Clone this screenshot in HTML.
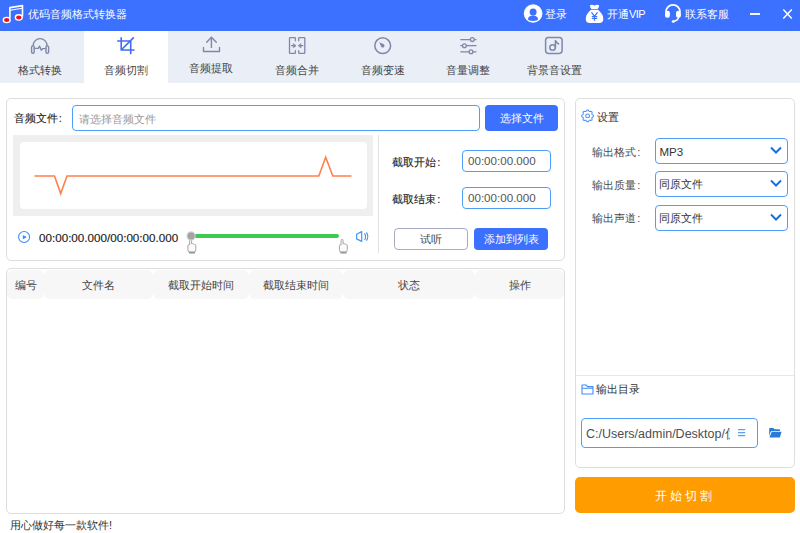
<!DOCTYPE html>
<html><head><meta charset="utf-8">
<style>
*{margin:0;padding:0;box-sizing:border-box}
html,body{width:800px;height:533px;overflow:hidden;background:#fff;font-family:"Liberation Sans",sans-serif;color:#333}
.a{position:absolute;white-space:nowrap}
#title{left:0;top:0;width:800px;height:31px;background:#3c70fe}
.tt{color:#fff;font-size:11px;line-height:14px}
#tabs{left:0;top:31px;width:800px;height:52px;background:#e9eef7}
.tab-act{left:84px;top:31px;width:84px;height:52px;background:#fff}
.tl{font-size:11px;line-height:14px;color:#444}
.panel{border:1px solid #dedede;border-radius:5px;background:#fff}
.lbl{font-size:11px;line-height:14px;color:#222;-webkit-text-stroke:0.1px #222}
.inp{border:1px solid #4f9ff8;border-radius:4px;background:#fff}
.btnb{background:#3c70fe;border-radius:4px;color:#fff;font-size:11px;line-height:14px;text-align:center}
.th{background:#f7f7f7;border-radius:5px;font-size:11px;line-height:14px;color:#444;text-align:center;border-radius:6px}
.sel{border:1px solid #4f9ff8;border-radius:4px;background:#fff;font-size:11px;color:#333}
</style></head><body>
<!-- title bar -->
<div id="title" class="a"></div>
<svg class="a" style="left:0;top:0" width="30" height="30" viewBox="0 0 30 30">
  <path d="M9.9 18 V7.6 L22.5 5.6 V16.5" fill="none" stroke="#fff" stroke-width="1.6" stroke-linejoin="round"/>
  <path d="M9.9 10.2 L22.5 8.2" fill="none" stroke="#fff" stroke-width="1.1"/>
  <ellipse cx="6.7" cy="20" rx="4.1" ry="3.3" fill="#fff"/>
  <ellipse cx="6.7" cy="20" rx="2.7" ry="2" fill="#e8141c"/>
  <ellipse cx="18.8" cy="17.4" rx="4.1" ry="3.3" fill="#fff"/>
  <ellipse cx="18.8" cy="17.4" rx="2.7" ry="2" fill="#e8141c"/>
</svg>
<div class="a tt" style="left:28px;top:7px">优码音频格式转换器</div>

<svg class="a" style="left:520px;top:0" width="90" height="30" viewBox="520 0 90 30">
  <circle cx="533.1" cy="13.5" r="9.3" fill="#fff"/>
  <circle cx="533.1" cy="12.1" r="3.5" fill="#3c70fe"/>
  <path d="M527.9 19.2 Q528.5 15.6 533 15.6 Q537.5 15.6 538.1 19.2 Q537.5 20.9 533 20.9 Q528.5 20.9 527.9 19.2 Z" fill="#3c70fe"/>
</svg>
<div class="a tt" style="left:545px;top:7px">登录</div>
<svg class="a" style="left:580px;top:0" width="30" height="30" viewBox="580 0 30 30">
  <path d="M590 5.2 Q592 4 594.5 5.6 Q597 4 599 5.2 Q599.5 7.5 597.6 9 H591.4 Q589.5 7.5 590 5.2 Z" fill="#fff"/>
  <path d="M591 9.8 H598 Q603.6 14.5 603.3 19.5 Q603 22.9 599.5 22.9 H589.5 Q586 22.9 585.8 19.5 Q585.5 14.5 591 9.8 Z" fill="#fff"/>
  <path d="M591.5 12.3 L594.5 16.3 L597.5 12.3 M594.5 16.3 V20.7 M591.8 16.6 H597.2 M591.8 18.5 H597.2" fill="none" stroke="#3c70fe" stroke-width="1.2"/>
</svg>
<div class="a tt" style="left:607px;top:7px">开通<span style="letter-spacing:-0.6px">VIP</span></div>
<svg class="a" style="left:660px;top:0" width="26" height="30" viewBox="660 0 26 30">
  <path d="M666 12 A7 7.2 0 0 1 680 12" fill="none" stroke="#fff" stroke-width="1.8"/>
  <rect x="665" y="10.8" width="4.9" height="7" rx="2.2" fill="#fff"/>
  <rect x="676" y="10.8" width="4.9" height="7" rx="2.2" fill="#fff"/>
  <path d="M678.8 17 Q678 20.5 673.5 21.3" fill="none" stroke="#fff" stroke-width="1.3"/>
  <ellipse cx="673.3" cy="21.5" rx="1.6" ry="1.2" fill="#fff"/>
</svg>
<div class="a tt" style="left:685px;top:7px">联系客服</div>
<div class="a" style="left:749.5px;top:13.2px;width:10.5px;height:1.6px;background:#f4f6ff"></div>
<svg class="a" style="left:780px;top:6px" width="16" height="16" viewBox="780 6 16 16">
  <path d="M783.3 9.4 L791.8 18.4 M791.8 9.4 L783.3 18.4" stroke="#fff" stroke-width="1.5"/>
</svg>

<!-- tabs -->
<div id="tabs" class="a"></div>
<div class="a tab-act"></div>
<svg class="a" style="left:0;top:0" width="600" height="60" fill="none" stroke-linecap="round" stroke-linejoin="round">
  <g stroke="#7f88a8" stroke-width="1.4">
    <path d="M33.2 45.5 A6.9 6.9 0 0 1 47 45.5"/>
    <rect x="31.6" y="45.9" width="2.6" height="7.4" rx="1.2"/>
    <rect x="46" y="45.9" width="2.6" height="7.4" rx="1.2"/>
    <path d="M35.2 48.4 H38.3 L39.6 46.2 L41.3 50.2 L42.6 48.6 H45.5"/>
  </g>
  <g stroke="#3d6ef5" stroke-width="1.6" stroke-linecap="butt">
    <path d="M117.2 41 H130.7 V54.3"/>
    <path d="M121.2 37.2 V50 H134.5"/>
    <path d="M121.2 50 L133.8 37.4"/>
  </g>
  <g stroke="#7f88a8" stroke-width="1.4">
    <path d="M206.7 42.2 L211.4 37.3 L216.3 42.2"/>
    <path d="M211.4 37.5 V47.4"/>
    <path d="M203.5 47.4 V51.5 H219.5 V47.4"/>
  </g>
  <g stroke="#7f88a8" stroke-width="1.3">
    <path d="M295.4 40.8 V38.2 Q295.4 37.6 294.8 37.6 H290.1 Q289.5 37.6 289.5 38.2 V52.8 Q289.5 53.4 290.1 53.4 H294.8 Q295.4 53.4 295.4 52.8 V50.7"/>
    <path d="M298.7 40.8 V38.2 Q298.7 37.6 299.3 37.6 H304.2 Q304.8 37.6 304.8 38.2 V52.8 Q304.8 53.4 304.2 53.4 H299.3 Q298.7 53.4 298.7 52.8 V50.7"/>
    <path d="M291.5 45.7 H294"/>
    <path d="M302.8 45.7 H300.3"/>
  </g>
  <path d="M293.6 43.7 L296.1 45.7 L293.6 47.7 Z M300.7 43.7 L298.2 45.7 L300.7 47.7 Z" fill="#7f88a8" stroke="#7f88a8" stroke-width="0.6" stroke-linejoin="round"/>
  <g stroke="#7f88a8" stroke-width="1.5">
    <circle cx="382.7" cy="45.7" r="7.9"/>
  </g>
  <path d="M379.3 42.3 L383.4 44.04 A1.8 1.8 0 1 1 381.04 46.4 Z" fill="#7f88a8"/>
  <g stroke="#7f88a8" stroke-width="1.3">
    <path d="M460.8 39.6 H476"/>
    <path d="M460.8 45.7 H476"/>
    <path d="M460.8 51.8 H476"/>
  </g>
  <g stroke="#7f88a8" stroke-width="1.3" fill="#e9eef7">
    <circle cx="472.3" cy="39.6" r="1.9"/>
    <circle cx="464.4" cy="45.7" r="1.9"/>
    <circle cx="471" cy="51.8" r="1.9"/>
  </g>
  <g stroke="#7f88a8" stroke-width="1.5">
    <rect x="545.6" y="37.4" width="16.5" height="16" rx="2.8"/>
    <circle cx="552.6" cy="47.5" r="2.8"/>
    <path d="M555.4 47.4 V40.5 Q556 42.5 558.6 44"/>
  </g>
</svg>
<div class="a tl" style="left:18px;top:63px">格式转换</div>
<div class="a tl" style="left:104px;top:63px">音频切割</div>
<div class="a tl" style="left:189px;top:61px">音频提取</div>
<div class="a tl" style="left:275px;top:63px">音频合并</div>
<div class="a tl" style="left:361px;top:63px">音频变速</div>
<div class="a tl" style="left:446px;top:63px">音量调整</div>
<div class="a tl" style="left:527px;top:63px">背景音设置</div>

<!-- top panel -->
<div class="a panel" style="left:6px;top:98px;width:559px;height:163px"></div>
<div class="a lbl" style="left:13.5px;top:111px">音频文件<span style="margin-left:1.3px">:</span></div>
<div class="a inp" style="left:72px;top:105px;width:408px;height:26px"></div>
<div class="a" style="left:79px;top:112px;font-size:11px;line-height:14px;color:#999">请选择音频文件</div>
<div class="a btnb" style="left:485px;top:105px;width:73px;height:26px;line-height:26px">选择文件</div>

<div class="a" style="left:13px;top:135px;width:360px;height:81px;background:#efefef"></div>
<div class="a" style="left:20px;top:142px;width:347px;height:67px;background:#fff;border-radius:4px"></div>
<svg class="a" style="left:0;top:0" width="400" height="260">
  <polyline points="34.5,176 54.5,176 60.7,193.5 67,176 318.8,176 325.7,157.3 332.8,176 351.5,176" fill="none" stroke="#ff7f4d" stroke-width="1.6"/>
</svg>
<div class="a" style="left:378px;top:135px;width:1px;height:118px;background:#e2e2e2"></div>

<div class="a lbl" style="left:392px;top:155px">截取开始<span style="margin-left:1.3px">:</span></div>
<div class="a inp" style="left:462px;top:150px;width:89px;height:22px"></div>
<div class="a" style="left:468px;top:154px;font-size:11.6px;line-height:14px;color:#555">00:00:00.000</div>
<div class="a lbl" style="left:392px;top:192px">截取结束<span style="margin-left:1.3px">:</span></div>
<div class="a inp" style="left:462px;top:187px;width:89px;height:22px"></div>
<div class="a" style="left:468px;top:191px;font-size:11.6px;line-height:14px;color:#555">00:00:00.000</div>
<div class="a" style="left:394px;top:228px;width:74px;height:22px;border:1px solid #a7acc2;border-radius:4px;font-size:11px;line-height:20px;text-align:center;color:#444">试听</div>
<div class="a btnb" style="left:474px;top:228px;width:74px;height:22px;line-height:22px">添加到列表</div>

<svg class="a" style="left:17px;top:229.5px" width="14" height="14" viewBox="0 0 14 14">
  <circle cx="7.1" cy="7" r="5.5" fill="none" stroke="#3d8ef5" stroke-width="1.1"/>
  <path d="M6.3 5.9 L8.8 7.1 L6.3 8.4 Z" fill="#3d8ef5" stroke="#3d8ef5" stroke-width="1.1" stroke-linejoin="round"/>
</svg>
<div class="a" style="left:39px;top:231px;font-size:11.65px;line-height:14px;color:#1a1a1a;-webkit-text-stroke:0.15px #1a1a1a">00:00:00.000/00:00:00.000</div>
<div class="a" style="left:192px;top:233.5px;width:147px;height:4.5px;background:#3bcb4e;border-radius:3px"></div>
<svg class="a" style="left:0;top:0" width="360" height="260" viewBox="0 0 360 260">
  <defs><g id="hand"><path d="M2.6 1.6 Q2.6 0.4 3.6 0.4 Q4.6 0.4 4.6 1.6 V4.8 Q5.6 4.3 6.3 5 Q7.3 4.6 7.8 5.6 Q8.8 5.5 8.8 6.8 V10.2 Q8.8 12.2 7.9 13 H1.8 Q0.9 12.2 0.9 10.2 V6.6 Q0.9 5.6 2.6 5.8 Z" fill="#fbfbfb" stroke="#9c9c9c" stroke-width="0.9"/><rect x="1.9" y="12.7" width="6.1" height="1.9" fill="#9c9c9c"/></g></defs>
  <use href="#hand" x="187" y="239"/>
  <circle cx="191.1" cy="235.9" r="4.6" fill="#cfcfcf"/>
  <circle cx="191.1" cy="235.9" r="3.4" fill="#a3a3a3"/>
  <use href="#hand" x="338.5" y="239"/>
</svg>
<svg class="a" style="left:350px;top:226px" width="24" height="22" viewBox="350 226 24 22">
  <path d="M356.6 234.3 L361.7 231.6 V241.4 L356.6 238.9 Z" fill="none" stroke="#4896f5" stroke-width="1.2" stroke-linejoin="round"/>
  <path d="M364.6 233.2 Q366.6 236.5 364.6 239.9" fill="none" stroke="#4896f5" stroke-width="1.1"/>
  <path d="M366.4 232.4 Q369.3 236.5 366.4 240.6" fill="none" stroke="#4896f5" stroke-width="1.1"/>
</svg>

<!-- table panel -->
<div class="a panel" style="left:6px;top:268px;width:559px;height:246px"></div>
<div class="a th" style="left:7px;top:270px;width:37px;height:29px;line-height:30px">编号</div>
<div class="a th" style="left:44px;top:270px;width:109px;height:29px;line-height:30px">文件名</div>
<div class="a th" style="left:153px;top:270px;width:96px;height:29px;line-height:30px">截取开始时间</div>
<div class="a th" style="left:249px;top:270px;width:94px;height:29px;line-height:30px">截取结束时间</div>
<div class="a th" style="left:343px;top:270px;width:132px;height:29px;line-height:30px">状态</div>
<div class="a th" style="left:475px;top:270px;width:89px;height:29px;line-height:30px">操作</div>

<div class="a" style="left:10px;top:518px;font-size:11px;line-height:14px;color:#333">用心做好每一款软件!</div>

<!-- settings panel -->
<div class="a panel" style="left:575px;top:98px;width:220px;height:370px"></div>
<svg class="a" style="left:578px;top:106px" width="20" height="20" viewBox="578 106 20 20">
  <circle cx="587.6" cy="115.9" r="1.9" fill="none" stroke="#4896f5" stroke-width="1.1"/>
  <path d="M593.55 115.90 L593.46 116.28 L593.20 116.64 L592.85 116.94 L592.48 117.21 L592.17 117.45 L591.99 117.72 L591.93 118.04 L591.97 118.43 L592.05 118.87 L592.08 119.34 L592.01 119.77 L591.81 120.11 L591.47 120.31 L591.04 120.38 L590.57 120.35 L590.12 120.27 L589.74 120.23 L589.42 120.29 L589.15 120.47 L588.91 120.78 L588.64 121.15 L588.34 121.50 L587.98 121.76 L587.60 121.85 L587.22 121.76 L586.86 121.50 L586.56 121.15 L586.29 120.78 L586.05 120.47 L585.78 120.29 L585.46 120.23 L585.08 120.27 L584.63 120.35 L584.16 120.38 L583.73 120.31 L583.39 120.11 L583.19 119.77 L583.12 119.34 L583.15 118.87 L583.23 118.43 L583.27 118.04 L583.21 117.72 L583.03 117.45 L582.72 117.21 L582.35 116.94 L582.00 116.64 L581.74 116.28 L581.65 115.90 L581.74 115.52 L582.00 115.16 L582.35 114.86 L582.72 114.59 L583.03 114.35 L583.21 114.08 L583.27 113.76 L583.23 113.38 L583.15 112.93 L583.12 112.46 L583.19 112.03 L583.39 111.69 L583.73 111.49 L584.16 111.42 L584.63 111.45 L585.08 111.53 L585.46 111.57 L585.78 111.51 L586.05 111.33 L586.29 111.02 L586.56 110.65 L586.86 110.30 L587.22 110.04 L587.60 109.95 L587.98 110.04 L588.34 110.30 L588.64 110.65 L588.91 111.02 L589.15 111.33 L589.42 111.51 L589.74 111.57 L590.12 111.53 L590.57 111.45 L591.04 111.42 L591.47 111.49 L591.81 111.69 L592.01 112.03 L592.08 112.46 L592.05 112.93 L591.97 113.38 L591.93 113.76 L591.99 114.08 L592.17 114.35 L592.48 114.59 L592.85 114.86 L593.20 115.16 L593.46 115.52 Z" fill="none" stroke="#4896f5" stroke-width="1.1" stroke-linejoin="round"/>
</svg>
<div class="a lbl" style="left:597px;top:110px;color:#333;-webkit-text-stroke:0">设置</div>

<div class="a lbl" style="left:592px;top:145px;color:#4a4a4a;-webkit-text-stroke:0">输出格式<span style="margin-left:1.3px">:</span></div>
<div class="a sel" style="left:655px;top:138px;width:133px;height:26px"></div>
<div class="a" style="left:659.5px;top:145px;font-size:11.5px;line-height:14px;color:#333">MP3</div>
<div class="a lbl" style="left:592px;top:178px;color:#4a4a4a;-webkit-text-stroke:0">输出质量<span style="margin-left:1.3px">:</span></div>
<div class="a sel" style="left:655px;top:171px;width:133px;height:26px"></div>
<div class="a" style="left:659px;top:177px;font-size:11px;line-height:14px;color:#333">同原文件</div>
<div class="a lbl" style="left:592px;top:211px;color:#4a4a4a;-webkit-text-stroke:0">输出声道<span style="margin-left:1.3px">:</span></div>
<div class="a sel" style="left:655px;top:205px;width:133px;height:26px"></div>
<div class="a" style="left:659px;top:211px;font-size:11px;line-height:14px;color:#333">同原文件</div>
<svg class="a" style="left:770px;top:146px" width="12" height="9" viewBox="0 0 12 9"><path d="M1 1.5 L6 6.5 L11 1.5" fill="none" stroke="#1a6fe0" stroke-width="2"/></svg>
<svg class="a" style="left:770px;top:179px" width="12" height="9" viewBox="0 0 12 9"><path d="M1 1.5 L6 6.5 L11 1.5" fill="none" stroke="#1a6fe0" stroke-width="2"/></svg>
<svg class="a" style="left:770px;top:213px" width="12" height="9" viewBox="0 0 12 9"><path d="M1 1.5 L6 6.5 L11 1.5" fill="none" stroke="#1a6fe0" stroke-width="2"/></svg>

<div class="a" style="left:576px;top:375px;width:218px;height:1px;background:#e8e8e8"></div>
<svg class="a" style="left:580.5px;top:383.5px" width="13" height="11" viewBox="0 0 13 11">
  <path d="M1 1 H5 L6.5 2.6 H12 V10 H1 Z M1 4.2 H12" fill="none" stroke="#3d8ef5" stroke-width="1.1" stroke-linejoin="round"/>
</svg>
<div class="a lbl" style="left:596px;top:382px;color:#333;-webkit-text-stroke:0">输出目录</div>
<div class="a inp" style="left:581px;top:418px;width:177px;height:30px;overflow:hidden"></div>
<div class="a" style="left:586px;top:427px;width:144px;overflow:hidden;font-size:12.5px;line-height:15px;color:#4e4e4e">C:/Users/admin/Desktop/优码</div>
<svg class="a" style="left:730px;top:420px" width="60" height="25" viewBox="730 420 60 25">
  <path d="M738 429.6 H745.2 M738 432.6 H745.2 M738 435.6 H745.2" stroke="#5aa0f6" stroke-width="1.1"/>
  <path d="M769.2 428.6 Q769.2 427.9 769.9 427.9 H773.3 L774.6 429.2 H779.3 Q779.9 429.2 779.9 429.8 V431 H772 Q771 431 770.6 432 L769.2 436 Z" fill="#2a7bd6"/>
  <path d="M771.8 431.7 H781.3 Q781.6 431.7 781.5 432.1 L780 436.9 Q779.8 437.6 779.1 437.6 H770 Q769.4 437.6 769.6 437 Z" fill="#2a7bd6"/>
</svg>

<div class="a" style="left:575px;top:477px;width:220px;height:36px;background:#fe9c00;border-radius:5px"></div>
<div class="a" style="left:655px;top:488px;font-size:12px;line-height:16px;color:#fff;letter-spacing:3px">开始切割</div>
</body></html>
